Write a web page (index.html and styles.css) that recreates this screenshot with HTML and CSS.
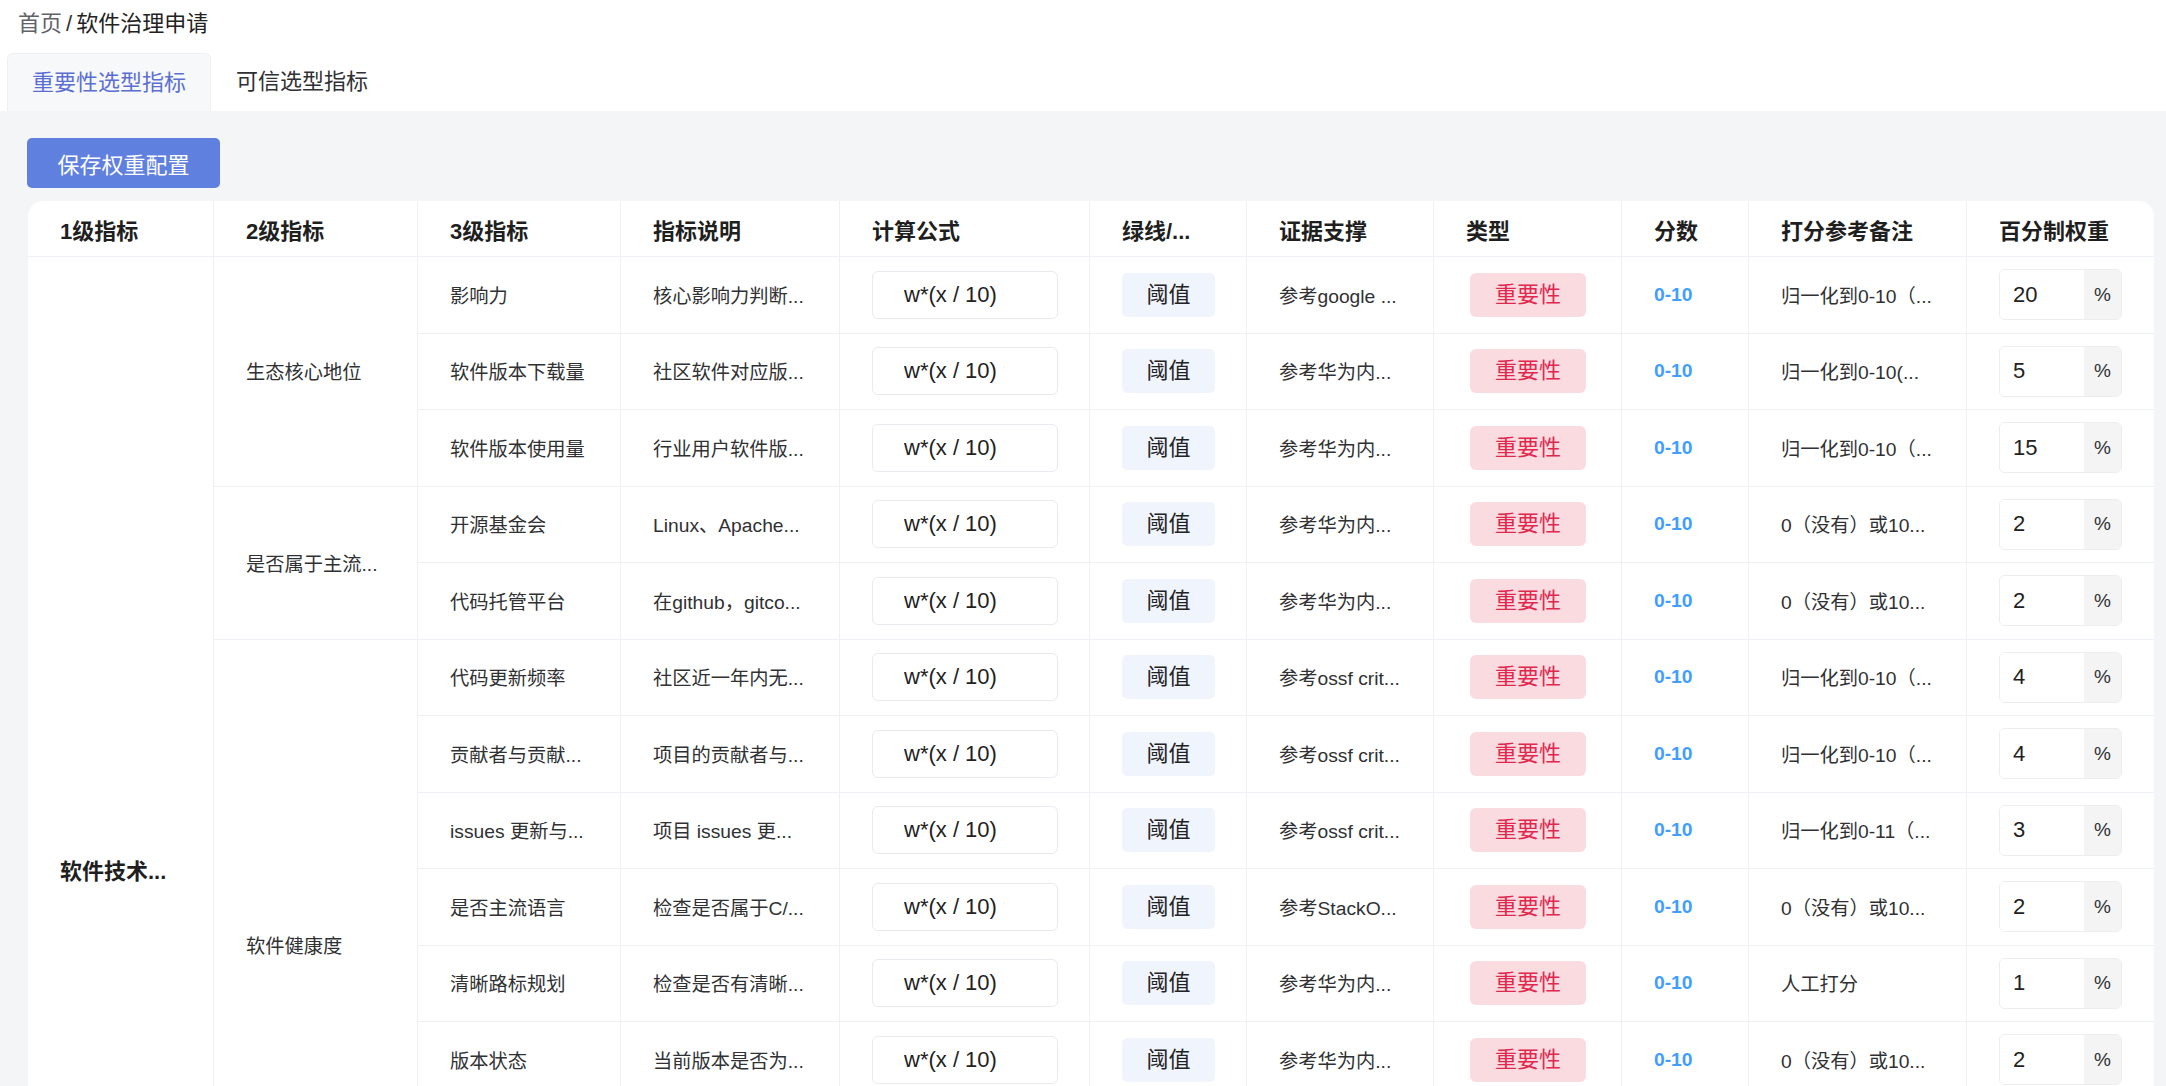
FILE: index.html
```html
<!DOCTYPE html>
<html lang="zh-CN">
<head>
    <meta charset="utf-8">
    <title>软件治理申请</title>
    <link rel="stylesheet" href="styles.css">
</head>
<body>

<div class="page">
    <div class="crumb">
        <span class="home">首页</span><span class="sep">/</span><span class="cur">软件治理申请</span>
    </div>
    <div class="tabs">
        <div class="tab active">重要性选型指标</div>
        <div class="tab">可信选型指标</div>
    </div>

    <div class="main">
        <button class="save">保存权重配置</button>
        <table class="grid">
            <colgroup>
                <col class="w-lv1">
                <col class="w-lv2">
                <col class="w-lv3">
                <col class="w-desc">
                <col class="w-formula">
                <col class="w-line">
                <col class="w-proof">
                <col class="w-type">
                <col class="w-score">
                <col class="w-note">
                <col class="w-weight">
            </colgroup>
            <thead>
                <tr class="head">
                    <th>1级指标</th>
                    <th>2级指标</th>
                    <th>3级指标</th>
                    <th>指标说明</th>
                    <th>计算公式</th>
                    <th>绿线/...</th>
                    <th>证据支撑</th>
                    <th>类型</th>
                    <th>分数</th>
                    <th>打分参考备注</th>
                    <th>百分制权重</th>
                </tr>
            </thead>
            <tbody id="rows"></tbody>
        </table>
    </div>
</div>

<script>
    const rows = [
        { group: '生态核心地位', span: 3, name: '影响力', desc: '核心影响力判断...', proof: '参考google ...', note: '归一化到0-10（...', weight: 20 },
        { name: '软件版本下载量', desc: '社区软件对应版...', proof: '参考华为内...', note: '归一化到0-10(...', weight: 5 },
        { name: '软件版本使用量', desc: '行业用户软件版...', proof: '参考华为内...', note: '归一化到0-10（...', weight: 15 },
        { group: '是否属于主流...', span: 2, name: '开源基金会', desc: 'Linux、Apache...', proof: '参考华为内...', note: '0（没有）或10...', weight: 2 },
        { name: '代码托管平台', desc: '在github，gitco...', proof: '参考华为内...', note: '0（没有）或10...', weight: 2 },
        { group: '软件健康度', span: 8, name: '代码更新频率', desc: '社区近一年内无...', proof: '参考ossf crit...', note: '归一化到0-10（...', weight: 4 },
        { name: '贡献者与贡献...', desc: '项目的贡献者与...', proof: '参考ossf crit...', note: '归一化到0-10（...', weight: 4 },
        { name: 'issues 更新与...', desc: '项目 issues 更...', proof: '参考ossf crit...', note: '归一化到0-11（...', weight: 3 },
        { name: '是否主流语言', desc: '检查是否属于C/...', proof: '参考StackO...', note: '0（没有）或10...', weight: 2 },
        { name: '清晰路标规划', desc: '检查是否有清晰...', proof: '参考华为内...', note: '人工打分', weight: 1 },
        { name: '版本状态', desc: '当前版本是否为...', proof: '参考华为内...', note: '0（没有）或10...', weight: 2 },
        { name: '文档完整性', desc: '检查是否有完整...', proof: '参考华为内...', note: '人工打分', weight: 8 },
        { name: '测试覆盖率', desc: '单元测试覆盖率...', proof: '参考ossf crit...', note: '归一化到0-10（...', weight: 8 },
        { group: '软件安全性', span: 3, name: '漏洞修复时效', desc: '已知漏洞平均修...', proof: '参考华为内...', note: '归一化到0-10（...', weight: 10 },
        { name: '安全漏洞数量', desc: '近一年公开的安...', proof: '参考华为内...', note: '归一化到0-10（...', weight: 8 },
        { name: '许可证合规', desc: '检查许可证是否...', proof: '参考华为内...', note: '0（没有）或10...', weight: 6 }
    ];

    const body = document.getElementById('rows');
    rows.forEach((row, index) => {
        const tr = document.createElement('tr');
        tr.classList.add('row');
        tr.innerHTML = `
            ${index === 0 ? `<td rowspan="${rows.length}" class="lv1">软件技术...</td>` : ''}
            ${row.group ? `<td rowspan="${row.span}">${row.group}</td>` : ''}
            <td>${row.name}</td>
            <td>${row.desc}</td>
            <td><input class="formula" type="text" value="w*(x / 10)"></td>
            <td><span class="badge threshold">阈值</span></td>
            <td>${row.proof}</td>
            <td><span class="badge tag">重要性</span></td>
            <td class="score">0-10</td>
            <td>${row.note}</td>
            <td>
                <div class="weight">
                    <input type="text" value="${row.weight}">
                    <span class="unit">%</span>
                </div>
            </td>
        `;
        body.appendChild(tr);
    });
</script>

</body>
</html>
```

FILE: styles.css
```css
body {
    margin: 0;
    font-family: "Liberation Sans", "Noto Sans CJK SC", sans-serif;
    color: #303133;
    background-color: #fff;
}
.page {
    height: 100vh;
    display: flex;
    flex-direction: column;
    overflow: hidden;
}
.crumb {
    height: 53px;
    box-sizing: border-box;
    padding: 8px 18px 0;
    font-size: 22px;
    line-height: 31px;
}
.crumb .home {
    color: #606266;
}
.crumb .sep {
    margin: 0 4px;
    color: #303133;
}
.crumb .cur {
    color: #222;
}
.tabs {
    display: flex;
    height: 58px;
    padding-left: 7px;
}
.tab {
    padding: 0 25px;
    font-size: 22px;
    line-height: 58px;
    color: #303133;
}
.tab.active {
    padding: 0 24px;
    background-color: #f7f8fa;
    border: 1px solid #eef0f4;
    border-bottom: none;
    border-radius: 6px 6px 0 0;
    line-height: 57px;
    color: #5b6fd3;
}
.main {
    flex: 1;
    padding: 27px 12px 0 27px;
    background-color: #f4f5f7;
    overflow: hidden;
}
.save {
    display: block;
    width: 193px;
    height: 50px;
    border: none;
    border-radius: 5px;
    background-color: #6080e0;
    color: #fff;
    font-family: inherit;
    font-size: 22px;
    cursor: pointer;
}
.save:hover {
    background-color: #5270d4;
}
.grid {
    width: 2126px;
    margin: 13px 0 0 1px;
    table-layout: fixed;
    border-collapse: separate;
    border-spacing: 0;
    background-color: #fff;
    border-radius: 15px 15px 0 0;
}
.w-lv1 { width: 186px; }
.w-lv2 { width: 204px; }
.w-lv3 { width: 203px; }
.w-desc { width: 219px; }
.w-formula { width: 250px; }
.w-line { width: 157px; }
.w-proof { width: 187px; }
.w-type { width: 188px; }
.w-score { width: 127px; }
.w-note { width: 218px; }
.w-weight { width: 187px; }
th, td {
    padding: 0 32px;
    text-align: left;
    white-space: nowrap;
    overflow: hidden;
    text-overflow: ellipsis;
    border-right: 1px solid #eef0f5;
    border-bottom: 1px solid #eef0f5;
}
th:last-child, td:last-child {
    border-right: none;
}
.head {
    height: 56px;
}
th {
    font-size: 22px;
    font-weight: bold;
    color: #1f1f1f;
}
.row {
    height: 76.5px;
}
td {
    font-size: 19.25px;
}
.lv1 {
    font-size: 22px;
    font-weight: bold;
    color: #1f1f1f;
}
.formula {
    display: block;
    width: 186px;
    height: 48px;
    box-sizing: border-box;
    padding: 0 0 0 31px;
    border: 1px solid #e8eaef;
    border-radius: 6px;
    font-family: "Liberation Sans", sans-serif;
    font-size: 22px;
    color: #222;
    outline: none;
}
.badge {
    display: block;
    height: 44px;
    box-sizing: border-box;
    border-radius: 5px;
    font-size: 22px;
    line-height: 44px;
    text-align: center;
}
.threshold {
    width: 93px;
    background-color: #f0f4fd;
    color: #222;
}
.tag {
    width: 116px;
    margin-left: 4px;
    border-radius: 6px;
    background-color: #fadbe0;
    color: #e0284f;
}
.score {
    color: #409eff;
    font-weight: bold;
}
.weight {
    display: flex;
    width: 123px;
    height: 51px;
    box-sizing: border-box;
    border: 1px solid #ebedf0;
    border-radius: 6px;
    overflow: hidden;
}
.weight input {
    flex: 1;
    min-width: 0;
    padding: 0 0 0 13px;
    border: none;
    font-family: "Liberation Sans", sans-serif;
    font-size: 22px;
    color: #222;
    outline: none;
}
.weight .unit {
    width: 37px;
    display: flex;
    align-items: center;
    justify-content: center;
    background-color: #f4f4f5;
    font-size: 19px;
    color: #303133;
}
```
